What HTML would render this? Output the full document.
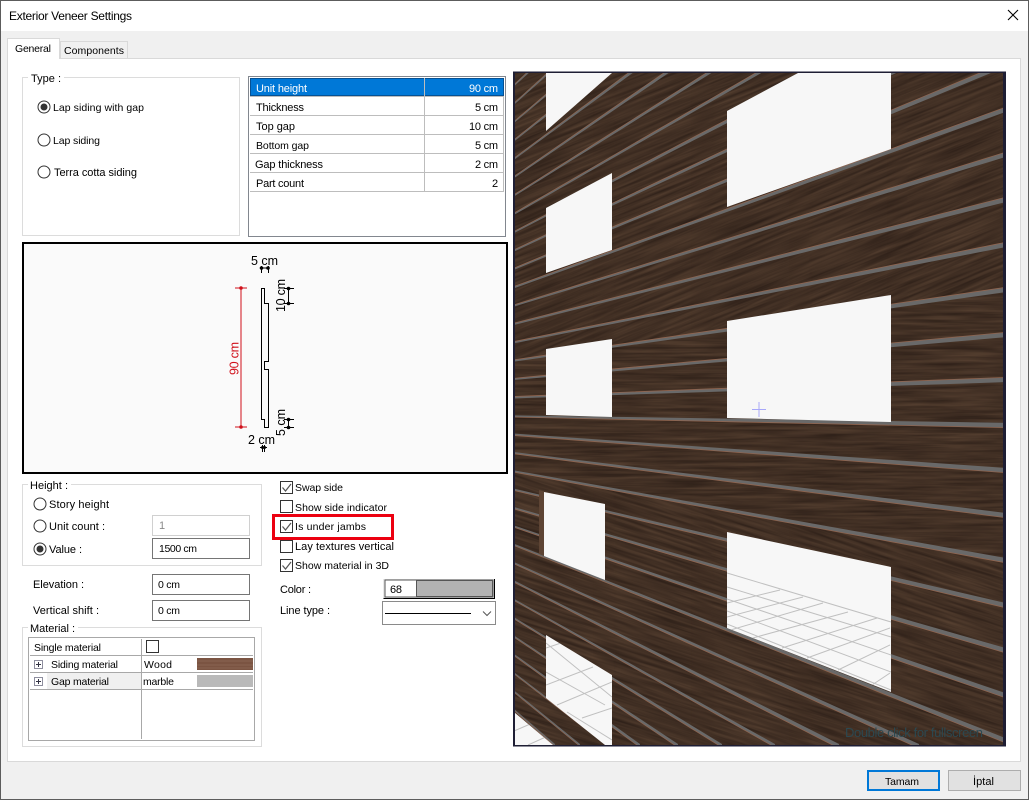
<!DOCTYPE html>
<html><head><meta charset="utf-8"><title>Exterior Veneer Settings</title>
<style>
html,body{margin:0;padding:0;width:1029px;height:800px;overflow:hidden;background:#f0f0f0}
svg{display:block;font-family:"Liberation Sans",sans-serif;font-size:11px;fill:#000}
</style></head><body>
<svg xmlns="http://www.w3.org/2000/svg" width="1029" height="800" viewBox="0 0 1029 800">
<defs>
<filter id="g" x="0" y="0" width="100%" height="100%" color-interpolation-filters="sRGB">
<feTurbulence type="fractalNoise" baseFrequency="0.014 0.3" numOctaves="3" seed="4"/>
<feColorMatrix type="matrix" values=".2 0 0 0 .155  .16 0 0 0 .105  .12 0 0 0 .08  0 0 0 0 1"/>
</filter>
<linearGradient id="fg" x1="0" y1="0" x2="1" y2="0"><stop offset="0" stop-color="#000"/><stop offset=".2" stop-color="#fff"/></linearGradient>
<mask id="fade" maskUnits="objectBoundingBox" maskContentUnits="objectBoundingBox" x="0" y="0" width="1" height="1"><rect x="0" y="0" width="1" height="1" fill="url(#fg)"/></mask>
<clipPath id="sc"><rect x="515" y="73" width="488" height="672"/></clipPath>
<clipPath id="cu"><polygon points="515,73 1003,73 1003,290 515,361"/></clipPath>
<clipPath id="cl"><polygon points="515,470 1003,560 1003,745 515,745"/></clipPath>
<clipPath id="wg"><polygon points="727,532 891,567 891,692 727,628"/></clipPath>
<clipPath id="wh"><polygon points="546,635 612,675 612,745 605,745 546,698"/></clipPath>
<clipPath id="wc"><polygon points="514,712 553,745 514,745"/></clipPath>
</defs>

<!-- window chrome -->
<rect x="0" y="0" width="1029" height="800" fill="#5c5c5c"/>
<rect x="1" y="1" width="1027" height="798" fill="#f0f0f0"/>
<rect x="1" y="1" width="1027" height="30" fill="#fff"/>
<text x="9" y="20" font-size="12" textLength="123">Exterior Veneer Settings</text>
<path d="M1008 10L1018 20M1018 10L1008 20" stroke="#000" stroke-width="1.1" fill="none"/>

<!-- tabs -->
<rect x="60.500" y="41.500" width="67" height="17" fill="#f0f0f0" stroke="#d9d9d9"/>
<rect x="7.500" y="58.500" width="1013" height="703" fill="#fff" stroke="#d9d9d9"/>
<path d="M7.500 59V38.500H59.500V59" fill="#fff" stroke="#d9d9d9"/>
<rect x="8" y="56" width="51" height="4" fill="#fff"/>
<text x="15" y="52" font-size="10.500" textLength="36">General</text>
<text x="64" y="54" font-size="10.500" textLength="60">Components</text>

<!-- Type group -->
<rect x="22.500" y="77.500" width="217" height="158" fill="none" stroke="#dcdcdc"/>
<rect x="28" y="72" width="36" height="12" fill="#fff"/>
<text x="31" y="82" textLength="30">Type :</text>
<circle cx="44" cy="107" r="6" fill="#fff" stroke="#333"/><circle cx="44" cy="107" r="3.500" fill="#333"/>
<circle cx="44" cy="140" r="6" fill="#fff" stroke="#333"/>
<circle cx="44" cy="172" r="6" fill="#fff" stroke="#333"/>
<text x="53" y="111" font-size="10.500" textLength="91">Lap siding with gap</text>
<text x="53" y="144" font-size="10.500" textLength="47">Lap siding</text>
<text x="54" y="176" textLength="83">Terra cotta siding</text>

<!-- Property grid -->
<rect x="248.500" y="76.500" width="257" height="160" fill="#fff" stroke="#82878f"/>
<rect x="250" y="78" width="254" height="18" fill="#0078d7"/>
<rect x="250.500" y="78.500" width="253" height="17" fill="none" stroke="#0a2a50" stroke-dasharray="1 1"/>
<path d="M250 96.500H504M250 115.500H504M250 134.500H504M250 153.500H504M250 172.500H504M250 191.500H504M424.500 78V191M503.500 96V191" stroke="#bdbdbd" fill="none"/>
<text x="256" y="92" fill="#fff" textLength="51">Unit height</text>
<text x="256" y="111" textLength="48">Thickness</text>
<text x="256" y="130" textLength="39">Top gap</text>
<text x="256" y="149" font-size="10.500" textLength="53">Bottom gap</text>
<text x="255" y="168" textLength="68">Gap thickness</text>
<text x="256" y="187" textLength="48">Part count</text>
<text x="469" y="92" fill="#fff" textLength="29">90 cm</text>
<text x="475" y="111" textLength="23">5 cm</text>
<text x="469" y="130" textLength="29">10 cm</text>
<text x="475" y="149" textLength="23">5 cm</text>
<text x="475" y="168" textLength="23">2 cm</text>
<text x="492" y="187">2</text>

<!-- Diagram -->
<rect x="23" y="243" width="484" height="230" fill="#fafafa" stroke="#000" stroke-width="2"/>
<path d="M261.500 288.500H264.500V303.500H268.500V361.500H264.500V369.500H268.500V427.500H264.500V419.500H261.500Z" fill="none" stroke="#000"/>
<path d="M241 288V427M235 288H247M235 427H247" stroke="#d0101a" fill="none"/>
<circle cx="241" cy="288" r="1.800" fill="#d0101a"/><circle cx="241" cy="427" r="1.800" fill="#d0101a"/>
<text transform="translate(238.500 375) rotate(-90)" fill="#d0101a" font-size="12.500" textLength="33">90 cm</text>
<path d="M261.500 266V273M268.500 266V273M260 268H269M284 288.500H294M284 303.500H294M288.500 288.500V303.500M284 419.500H294M284 427.500H294M288.500 419.500V427.500M262.500 445V452M264.500 445V452M260 447.500H267" stroke="#000" fill="none"/>
<circle cx="261.500" cy="268" r="1.800"/><circle cx="268" cy="268" r="1.800"/><circle cx="288.500" cy="288.500" r="1.800"/><circle cx="288.500" cy="303.500" r="1.800"/><circle cx="288.500" cy="419.500" r="1.800"/><circle cx="288.500" cy="427.500" r="1.800"/><circle cx="262.500" cy="447.500" r="1.500"/><circle cx="264.500" cy="447.500" r="1.500"/>
<text x="251" y="265" font-size="12.500" textLength="27">5 cm</text>
<text x="248" y="444" font-size="12.500" textLength="27">2 cm</text>
<text transform="translate(285 312) rotate(-90)" font-size="12.500" textLength="33">10 cm</text>
<text transform="translate(285 436) rotate(-90)" font-size="12.500" textLength="27">5 cm</text>

<!-- Height group -->
<rect x="22.500" y="484.500" width="239" height="81" fill="none" stroke="#dcdcdc"/>
<rect x="28" y="479" width="43" height="12" fill="#fff"/>
<text x="30" y="489" textLength="38">Height :</text>
<circle cx="40" cy="504" r="6" fill="#fff" stroke="#333"/>
<circle cx="40" cy="526" r="6" fill="#fff" stroke="#333"/>
<circle cx="40" cy="549" r="6" fill="#fff" stroke="#333"/><circle cx="40" cy="549" r="3.500" fill="#333"/>
<text x="49" y="508" textLength="60">Story height</text>
<text x="49" y="530" textLength="56">Unit count :</text>
<text x="49" y="553" textLength="33">Value :</text>
<rect x="152.500" y="515.500" width="97" height="20" fill="#fff" stroke="#d0d0d0"/>
<rect x="152.500" y="538.500" width="97" height="20" fill="#fff" stroke="#757575"/>
<rect x="152.500" y="574.500" width="97" height="20" fill="#fff" stroke="#757575"/>
<rect x="152.500" y="600.500" width="97" height="20" fill="#fff" stroke="#757575"/>
<text x="159" y="529" fill="#8a8a8a">1</text>
<text x="159" y="552" font-size="10.500" textLength="38">1500 cm</text>
<text x="158" y="588" font-size="10.500" textLength="22">0 cm</text>
<text x="158" y="614" font-size="10.500" textLength="22">0 cm</text>
<text x="33" y="588" textLength="51">Elevation :</text>
<text x="33" y="614" textLength="66">Vertical shift :</text>

<!-- Material group -->
<rect x="22.500" y="627.500" width="239" height="119" fill="none" stroke="#dcdcdc"/>
<rect x="28" y="622" width="50" height="12" fill="#fff"/>
<text x="30" y="632" textLength="45">Material :</text>
<rect x="28.500" y="637.500" width="226" height="103" fill="#fff" stroke="#a8a8a8"/>
<rect x="47" y="673" width="94" height="16" fill="#f0f0f0"/>
<path d="M30 655.500H253M30 672.500H253M30 689.500H253M141.500 639V739" stroke="#a8a8a8" fill="none"/>
<rect x="146.500" y="640.500" width="12" height="12" fill="#fff" stroke="#333"/>
<g fill="#fff" stroke="#8e8e9e"><rect x="34.500" y="660.500" width="8" height="8"/><rect x="34.500" y="677.500" width="8" height="8"/></g>
<path d="M36 664.500H41M38.500 662V667M36 681.500H41M38.500 679V684" stroke="#334" fill="none"/>
<rect x="197" y="658" width="56" height="12" fill="#7b5442"/>
<path d="M197 661H253M197 665H253M197 668H253" stroke="#92695a" fill="none" opacity=".7"/>
<rect x="197" y="675" width="56" height="12" fill="#b9b9b9"/>
<text x="34" y="651" font-size="10.500" textLength="67">Single material</text>
<text x="51" y="668" font-size="10.500" textLength="67">Siding material</text>
<text x="51" y="685" font-size="10.500" textLength="58">Gap material</text>
<text x="144" y="668" font-size="10.500" textLength="28">Wood</text>
<text x="143" y="685" font-size="10.500" textLength="31">marble</text>

<!-- Checkboxes -->
<g fill="#fff" stroke="#333">
<rect x="280.500" y="481.500" width="12" height="12"/>
<rect x="280.500" y="500.500" width="12" height="12"/>
<rect x="280.500" y="520.500" width="12" height="12"/>
<rect x="280.500" y="540.500" width="12" height="12"/>
<rect x="280.500" y="559.500" width="12" height="12"/>
</g>
<path d="M282.500 487.500L285.500 491L291 484M282.500 526.500L285.500 530L291 523M282.500 565.500L285.500 569L291 562" fill="none" stroke="#555" stroke-width="1.200"/>
<text x="295" y="491" font-size="10.500" textLength="48">Swap side</text>
<text x="295" y="511" font-size="10.500" textLength="92">Show side indicator</text>
<text x="295" y="530" font-size="10.500" textLength="71">Is under jambs</text>
<text x="295" y="550" textLength="99">Lay textures vertical</text>
<text x="295" y="569" font-size="10.500" textLength="94">Show material in 3D</text>
<rect x="273.500" y="515.500" width="119" height="23" fill="none" stroke="#ec0010" stroke-width="3"/>

<text x="280" y="593" textLength="31">Color :</text>
<rect x="383" y="579" width="112" height="20" fill="#e8e8e8"/>
<path d="M383.500 598.500H494.500V579" stroke="#000" fill="none"/>
<rect x="385" y="580" width="108" height="17" fill="#fff" stroke="#555"/>
<rect x="416.500" y="580.500" width="76" height="16" fill="#b2b2b2" stroke="#555"/>
<text x="390" y="593" textLength="12">68</text>
<text x="280" y="614" textLength="50">Line type :</text>
<rect x="382.500" y="601.500" width="113" height="23" fill="#fff" stroke="#8a8a8a"/>
<path d="M385 613.500H471" stroke="#000" fill="none"/>
<path d="M483 611.500L487 615.500L491 611.500" stroke="#555" fill="none"/>

<!-- 3D view -->
<rect x="513" y="71.500" width="493" height="675" fill="#1e1e34"/>
<rect x="515" y="73" width="488" height="672" filter="url(#g)"/>
<g clip-path="url(#cu)">
<rect x="515" y="53" width="98.500" height="328" filter="url(#g)" transform="matrix(1 -.4 0 1 0 225.600)"/>
<rect x="593" y="53" width="118.500" height="328" filter="url(#g)" mask="url(#fade)" transform="matrix(1 -.4 0 1 0 264.800)"/>
<rect x="691" y="53" width="118.500" height="328" filter="url(#g)" mask="url(#fade)" transform="matrix(1 -.4 0 1 0 304)"/>
<rect x="789" y="53" width="118.500" height="328" filter="url(#g)" mask="url(#fade)" transform="matrix(1 -.4 0 1 0 343.200)"/>
<rect x="887" y="53" width="116" height="328" filter="url(#g)" mask="url(#fade)" transform="matrix(1 -.4 0 1 0 382.400)"/>
</g>
<g clip-path="url(#cl)">
<rect x="515" y="450" width="98.500" height="315" filter="url(#g)" transform="matrix(1 .32 0 1 0 -180.500)"/>
<rect x="593" y="450" width="118.500" height="315" filter="url(#g)" mask="url(#fade)" transform="matrix(1 .32 0 1 0 -211.800)"/>
<rect x="691" y="450" width="118.500" height="315" filter="url(#g)" mask="url(#fade)" transform="matrix(1 .32 0 1 0 -243.200)"/>
<rect x="789" y="450" width="118.500" height="315" filter="url(#g)" mask="url(#fade)" transform="matrix(1 .32 0 1 0 -274.600)"/>
<rect x="887" y="450" width="116" height="315" filter="url(#g)" mask="url(#fade)" transform="matrix(1 .32 0 1 0 -305.900)"/>
</g>
<g clip-path="url(#sc)">
<g fill="#8f6550" transform="translate(0 -.8)">
<path d="M514 85L531 69V71L514 86.400ZM514 103.300L552 69V71L514 104.800ZM514 121.700L576 69V71L514 123.100ZM514 140L603 69V72L514 141.500ZM514 158.400L634 69V72L514 159.800ZM514 176.700L670 69V72L514 178.200ZM514 195.100L713 69V72L514 196.500ZM514 213.400L763 69V72L514 214.900ZM514 231.800L824 69V73L514 233.200ZM514 250.100L1003 18.700V23.100L514 251.600ZM514 268.500L1003 63.600V68L514 269.900ZM514 286.800L1003 108.500V112.900L514 288.300ZM514 305.200L1003 153.400V157.800L514 306.600ZM514 323.500L1003 198.300V202.700L514 325ZM514 341.900L1003 243.200V247.600L514 343.300ZM514 360.200L1003 288.100V292.500L514 361.700ZM514 378.600L1003 333V337.400L514 380ZM514 396.900L1003 377.900V382.300L514 398.400Z"/>
</g>
<g fill="#8f6550" transform="translate(0 .8)">
<path d="M514 415.300L1003 422.800V427.200L514 416.700ZM514 433.600L1003 467.700V472.100L514 435.100ZM514 452L1003 512.600V517L514 453.400ZM514 470.300L1003 557.500V561.900L514 471.800ZM514 488.700L1003 602.400V606.800L514 490.100ZM514 507L1003 647.300V651.700L514 508.500ZM514 525.400L1003 692.200V696.600L514 526.800ZM514 543.700L1003 737.100V741.500L514 545.200ZM514 562.100L919 744V748L514 563.500ZM514 580.400L839 744V748L514 581.900ZM514 598.800L775 744V747L514 600.200ZM514 617.100L722 744V747L514 618.600ZM514 635.500L678 744V747L514 636.900ZM514 653.800L640 744V747L514 655.300ZM514 672.200L608 744V746L514 673.600ZM514 690.500L580 744V746L514 692ZM514 708.900L555 744V746L514 710.300ZM514 727.200L533 744V746L514 728.700Z"/>
</g>
<g fill="#696969">
<path d="M514 85L531 69V71L514 86.400ZM514 103.300L552 69V71L514 104.800ZM514 121.700L576 69V71L514 123.100ZM514 140L603 69V72L514 141.500ZM514 158.400L634 69V72L514 159.800ZM514 176.700L670 69V72L514 178.200ZM514 195.100L713 69V72L514 196.500ZM514 213.400L763 69V72L514 214.900ZM514 231.800L824 69V73L514 233.200ZM514 250.100L1003 18.700V23.100L514 251.600ZM514 268.500L1003 63.600V68L514 269.900ZM514 286.800L1003 108.500V112.900L514 288.300ZM514 305.200L1003 153.400V157.800L514 306.600ZM514 323.500L1003 198.300V202.700L514 325ZM514 341.900L1003 243.200V247.600L514 343.300ZM514 360.200L1003 288.100V292.500L514 361.700ZM514 378.600L1003 333V337.400L514 380ZM514 396.900L1003 377.900V382.300L514 398.400Z"/>
<path d="M514 415.300L1003 422.800V427.200L514 416.700ZM514 433.600L1003 467.700V472.100L514 435.100ZM514 452L1003 512.600V517L514 453.400ZM514 470.300L1003 557.500V561.900L514 471.800ZM514 488.700L1003 602.400V606.800L514 490.100ZM514 507L1003 647.300V651.700L514 508.500ZM514 525.400L1003 692.200V696.600L514 526.800ZM514 543.700L1003 737.100V741.500L514 545.200ZM514 562.100L919 744V748L514 563.500ZM514 580.400L839 744V748L514 581.900ZM514 598.800L775 744V747L514 600.200ZM514 617.100L722 744V747L514 618.600ZM514 635.500L678 744V747L514 636.900ZM514 653.800L640 744V747L514 655.300ZM514 672.200L608 744V746L514 673.600ZM514 690.500L580 744V746L514 692ZM514 708.900L555 744V746L514 710.300ZM514 727.200L533 744V746L514 728.700Z"/>
</g>
<g fill="#f7f7f7">
<polygon points="546,73 612,73 546,131"/>
<polygon points="546,208 612,173 612,250 546,273"/>
<polygon points="727,111 798,73 891,73 891,149 727,207"/>
<polygon points="546,349 612,339 612,417 546,415"/>
<polygon points="727,321 891,295 891,422 727,418"/>
<polygon points="544,492 605,504 605,580 544,556"/>
<polygon points="727,532 891,567 891,692 727,628"/>
<polygon points="546,635 612,675 612,745 605,745 546,698"/>
<polygon points="514,712 553,745 514,745"/>
</g>
<polygon points="539,490 544,491.500 544,556 539,554" fill="#5d4434"/>
<g clip-path="url(#wg)" stroke="#c0c0c0" fill="none">
<path d="M727 573L891 622M727 587L891 637M727 599L891 655M727 611L891 672M727 624L891 690"/>
<path d="M782 648L877 618M807 658L890 628M838 670L890 645M872 685L890 673M727 645L848 612M727 631L823 603M727 617L803 597M727 603L780 590"/>
</g>
<g clip-path="url(#wh)" stroke="#c0c0c0" fill="none">
<path d="M546 685L593 667M557 705L612 682M582 718L612 708M546 648L570 640"/>
<path d="M546 672L605 705M546 643L612 697M567 712L612 740"/>
</g>
<g clip-path="url(#wc)" stroke="#c0c0c0" fill="none"><path d="M514 731L535 722M528 745L548 736"/></g>
<path d="M759 402V417M752 409.500H766" stroke="#a8a8fa" fill="none"/>
<text x="845" y="737" font-size="13" fill="#2c4850" textLength="138">Double click for fullscreen</text>
</g>

<!-- Buttons -->
<rect x="868" y="771" width="71" height="19" fill="#e1e1e1" stroke="#0078d7" stroke-width="2"/>
<text x="885" y="785" font-size="10.500" textLength="34">Tamam</text>
<rect x="948.500" y="770.500" width="72" height="20" fill="#e1e1e1" stroke="#adadad"/>
<text x="973" y="785" textLength="21">İptal</text>
</svg>
</body></html>
